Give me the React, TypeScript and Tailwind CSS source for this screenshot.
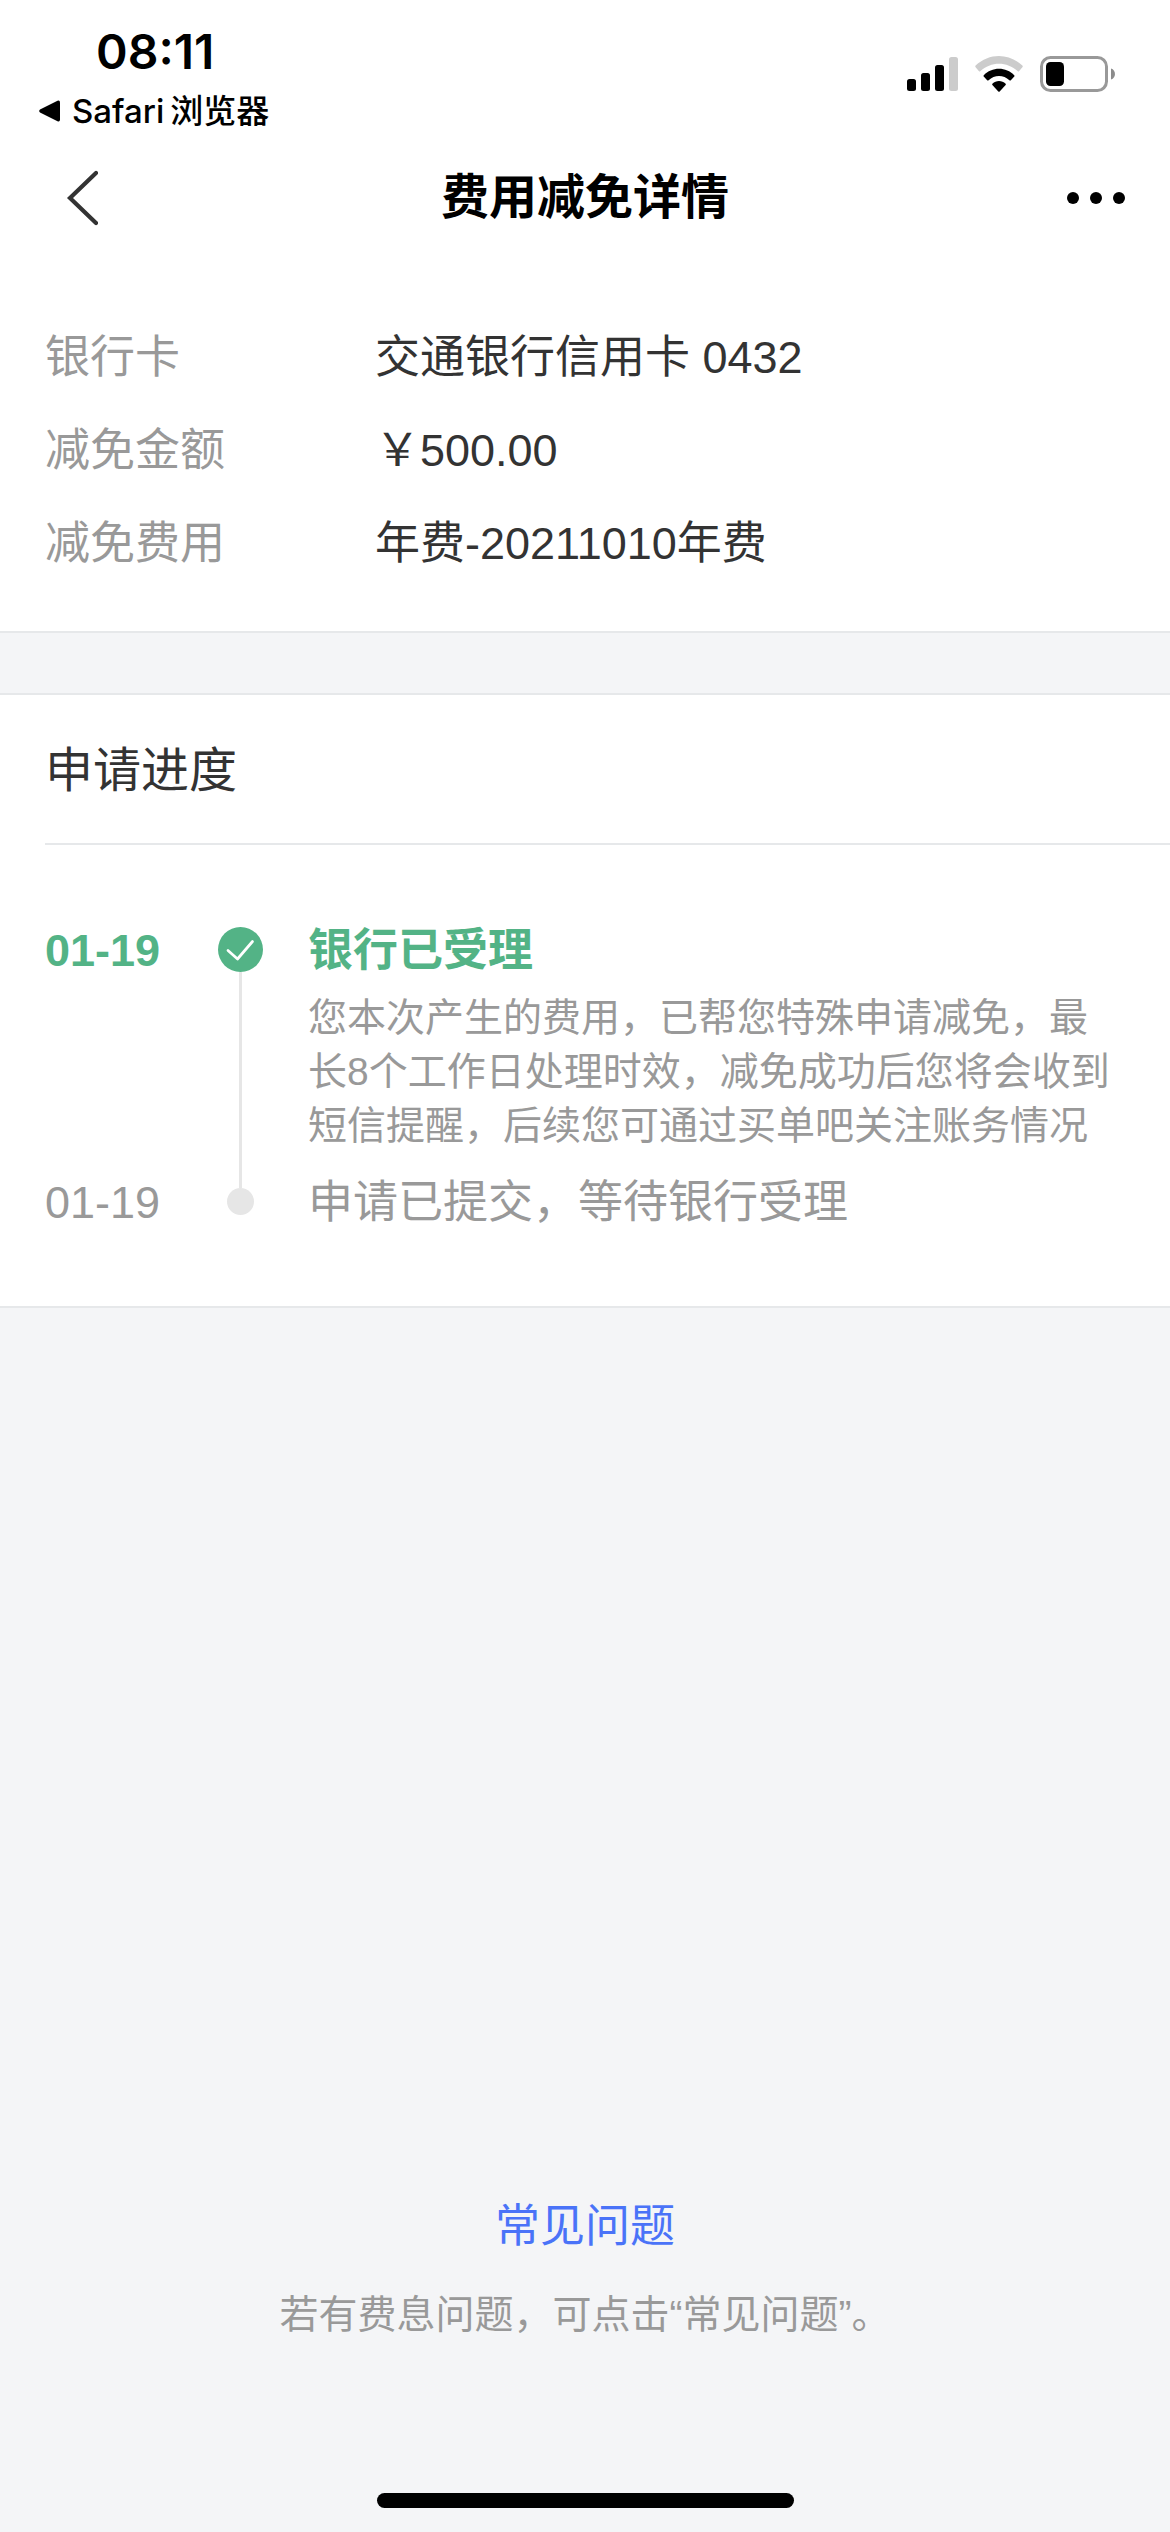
const details = [
  { label: "银行卡", value: "交通银行信用卡 0432" },
  { label: "减免金额", value: "￥500.00" },
  { label: "减免费用", value: "年费-20211010年费" },
];

function SignalIcon() {
  return (
    <svg width="51" height="36" viewBox="0 0 51 36" aria-hidden="true">
      <rect x="0" y="23" width="9" height="12" rx="2.5" />
      <rect x="14" y="17" width="9" height="18" rx="2.5" />
      <rect x="28" y="9" width="9" height="26" rx="2.5" />
      <rect x="42" y="1" width="9" height="34" rx="2.5" fill="#cccccc" />
    </svg>
  );
}

function WifiIcon() {
  return (
    <svg width="48" height="36" viewBox="0 0 48 36" aria-hidden="true">
      <path
        d="M0.4 11 Q0 10.2 0.6 9.6 C14 -3.2 34 -3.2 47.4 9.6 Q48 10.2 47.6 11 L44 15.3 Q43.4 15.8 42.8 15.3 C32 5.2 16 5.2 5.2 15.3 Q4.6 15.8 4 15.3 Z"
        fill="#cccccc"
      />
      <path d="M8.6 19.4 C17 10.6 31 10.6 39.4 19.4 Q39.8 20 39.3 20.6 L35.6 24.4 Q35 24.8 34.4 24.3 C28.6 18.6 19.4 18.6 13.6 24.3 Q13 24.8 12.4 24.4 L8.7 20.6 Q8.2 20 8.6 19.4 Z" />
      <path d="M17.4 27.7 C21 24.2 27 24.2 30.6 27.7 Q31.1 28.3 30.6 28.9 L24.7 35.4 Q24 36.1 23.3 35.4 L17.4 28.9 Q16.9 28.3 17.4 27.7 Z" />
    </svg>
  );
}

function BatteryIcon() {
  return (
    <svg width="75" height="36" viewBox="0 0 75 36" aria-hidden="true">
      <rect x="1.5" y="1.5" width="65" height="33" rx="9" fill="none" stroke="#999999" strokeWidth="3" />
      <rect x="6" y="6" width="18" height="24" rx="4.5" />
      <path d="M71 12.5 C76.3 14 76.3 22 71 23.5 Z" fill="#8c8c8c" />
    </svg>
  );
}

function StatusBar() {
  return (
    <div className="flex items-start justify-between pt-[22px] pr-[55px] pl-[39px] font-['Inter','Noto_Sans_CJK_SC',sans-serif] text-black">
      <div>
        <div className="pl-[57px] text-[48px] leading-[60px] font-semibold">08:11</div>
        <a href="#safari" className="flex items-center gap-3 text-[33px] leading-[58px] font-medium">
          <svg width="21" height="22" viewBox="0 0 21 22" aria-hidden="true">
            <path d="M1 9.6 L18.5 0.8 Q21 0 21 2.5 V19.5 Q21 22 18.5 21.2 L1 12.4 Q-0.6 11 1 9.6 Z" />
          </svg>
          <span className="flex gap-[6px]">
            <span>Safari</span>
            <span>浏览器</span>
          </span>
        </a>
      </div>
      <div className="flex gap-[17px] pt-[34px]">
        <SignalIcon />
        <WifiIcon />
        <BatteryIcon />
      </div>
    </div>
  );
}

function NavBar() {
  return (
    <header className="grid grid-cols-[1fr_auto_1fr] items-center px-[45px] pt-[22px] pb-[30px]">
      <button type="button" aria-label="返回" className="justify-self-start px-[21px] py-2">
        <svg width="32" height="56" viewBox="0 0 32 56" fill="none" aria-hidden="true">
          <path d="M30 3 L4 28 L30 53" stroke="#333333" strokeWidth="4.2" strokeLinecap="round" />
        </svg>
      </button>
      <h1 className="text-[48px] leading-[72px] font-bold text-black">费用减免详情</h1>
      <button type="button" aria-label="更多" className="flex gap-[11px] justify-self-end py-6">
        <span className="size-3 rounded-full bg-black" />
        <span className="size-3 rounded-full bg-black" />
        <span className="size-3 rounded-full bg-black" />
      </button>
    </header>
  );
}

export default function App() {
  return (
    <div className="flex min-h-screen flex-col bg-[#f4f5f7] font-['Liberation_Sans','Noto_Sans_CJK_SC',sans-serif] text-[45px] text-[#333333]">
      <div className="border-b-2 border-[#e6e8ea] bg-white">
        <StatusBar />
        <NavBar />
        <dl className="px-[45px] pt-[47px] pb-[41px]">
          {details.map((item) => (
            <div key={item.label} className="flex leading-[93px]">
              <dt className="w-[330px] shrink-0 text-[#999999]">{item.label}</dt>
              <dd>{item.value}</dd>
            </div>
          ))}
        </dl>
      </div>

      <section className="mt-[60px] border-y-2 border-[#e6e8ea] bg-white pl-[45px]">
        <h2 className="border-b-2 border-[#e6e8ea] pt-10 pb-9 text-[48px] leading-[72px]">申请进度</h2>
        <ol className="pt-[70px] pr-[45px] pb-[67px]">
          <li className="flex">
            <time className="w-[173px] shrink-0 leading-[72px] font-bold text-[#53b386]">01-19</time>
            <div className="flex w-[45px] shrink-0 flex-col items-center pt-3">
              <svg width="45" height="45" viewBox="0 0 45 45" fill="none" role="img" aria-label="已完成">
                <circle cx="22.5" cy="22.5" r="22.5" fill="#53b386" />
                <path d="M10 23.5 L19.5 32 L34.5 14.5" stroke="#ffffff" strokeWidth="2.7" strokeLinecap="round" strokeLinejoin="round" />
              </svg>
              <div className="w-[3px] grow bg-[#e6e6e6]" />
            </div>
            <div className="min-w-0 pb-[14px] pl-[45px]">
              <h3 className="leading-[72px] font-bold text-[#53b386]">银行已受理</h3>
              <p className="mt-1 text-[39px] leading-[54px] text-[#999999]">
                您本次产生的费用，已帮您特殊申请减免，最长8个工作日处理时效，减免成功后您将会收到短信提醒，后续您可通过买单吧关注账务情况
              </p>
            </div>
          </li>
          <li className="flex text-[#999999]">
            <time className="w-[173px] shrink-0 leading-[72px]">01-19</time>
            <div className="flex w-[45px] shrink-0 flex-col items-center">
              <div className="h-[21px] w-[3px] bg-[#e6e6e6]" />
              <div className="size-[27px] rounded-full bg-[#e6e6e6]" />
            </div>
            <p className="pl-[45px] leading-[72px]">申请已提交，等待银行受理</p>
          </li>
        </ol>
      </section>

      <footer className="mt-auto flex flex-col items-center pb-6">
        <a href="#faq" className="leading-[72px] text-[#4a73f8]">
          常见问题
        </a>
        <p className="mt-[22px] text-[39px] leading-[60px] text-[#999999]">若有费息问题，可点击“常见问题”。</p>
        <div className="mt-[148px] h-[15px] w-[417px] rounded-full bg-black" />
      </footer>
    </div>
  );
}
